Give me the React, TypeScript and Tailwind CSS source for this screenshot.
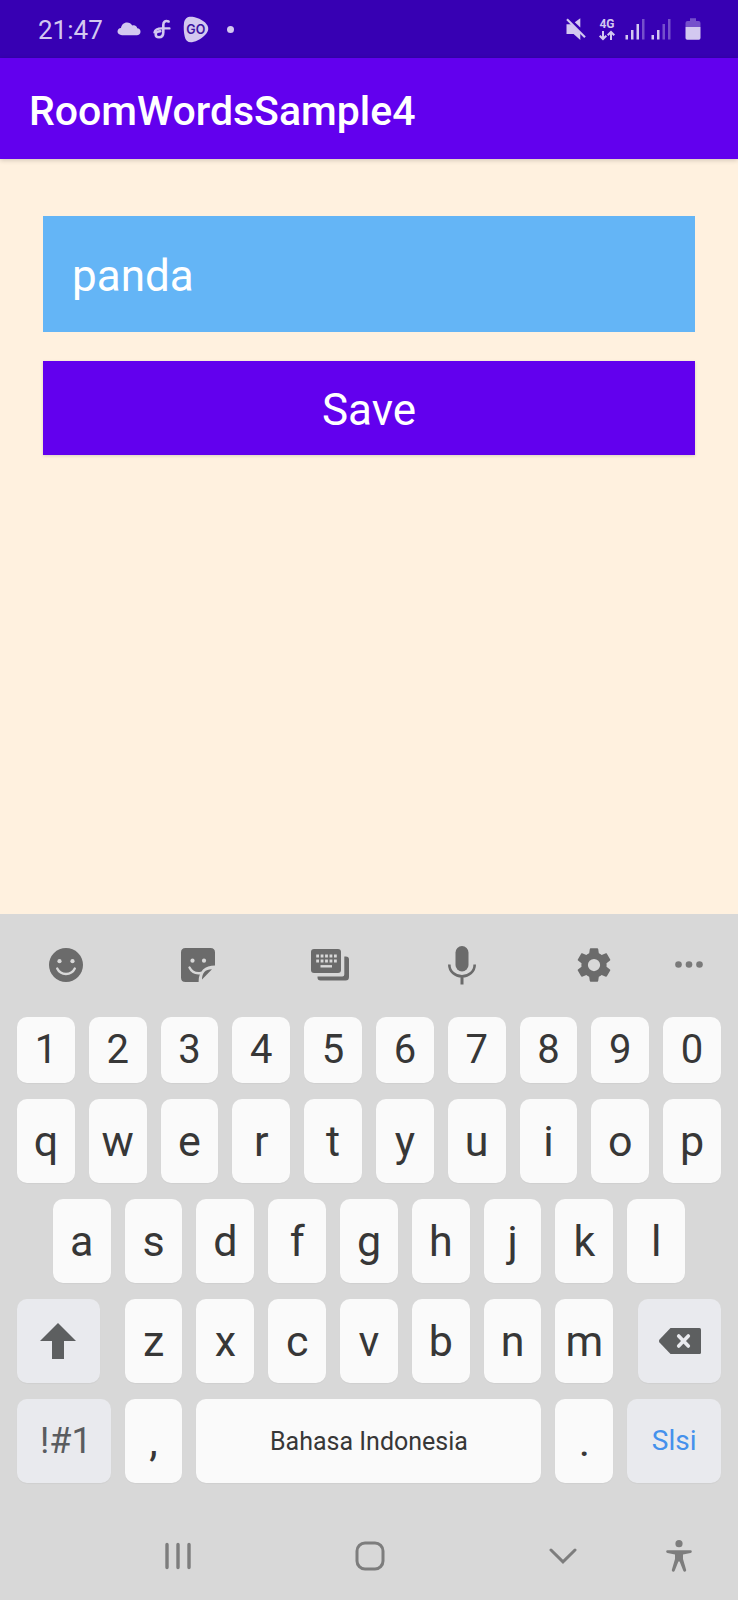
import { useState } from 'react';
import type { ReactNode } from 'react';

const digits = '1234567890'.split('');
const topLetters = 'qwertyuiop'.split('');
const homeLetters = 'asdfghjkl'.split('');
const bottomLetters = 'zxcvbnm'.split('');

function StatusBar() {
  return (
    <div className="flex h-[58px] items-center bg-[#3700b3] pl-[38px] pr-[37px] text-[#d3c8f0]">
      <span className="pt-[2px] text-[26px] leading-8">21:47</span>
      <svg className="ml-[14px] h-[14px] w-6" viewBox="0 0 24 14" fill="currentColor" aria-hidden="true">
        <path d="M5 13.200C2.400 13.200.5 11.700.5 9.600.5 7.700 2 6.300 4 6.100 4.300 2.800 6.800.4 10 .4c2.300 0 4.200 1.200 5.200 3.100.5-.2 1-.3 1.500-.3 1.900 0 3.300 1.300 3.500 3.100 2 .2 3.300 1.500 3.300 3.400 0 2.100-1.600 3.500-3.700 3.500z" />
      </svg>
      <svg className="ml-3 h-5 w-[18px]" viewBox="0 0 18 20" fill="none" stroke="currentColor" strokeLinecap="round" aria-hidden="true">
        <path d="M15.600 2.500C12.200 1.300 10.300 2.700 10.300 6v7.200c0 3-1.700 5-4.300 5-2 0-3.300-1.200-3.300-2.800 0-2 1.800-3.100 4.600-3.100" strokeWidth="2.600" />
        <path d="M16.400 9.400H9C4.800 9.400 2 10.800 1.500 13.400" strokeWidth="2.400" />
      </svg>
      <svg className="ml-3 h-[27px] w-[26px]" viewBox="0 0 26 27" aria-hidden="true">
        <path d="M1 7C1.700 2 5 .2 9.500.8c6 .8 13 4.600 15.100 9 1.200 2.600.8 5.200-1.200 7.700-3.200 4-9.600 8.200-14.400 8.700-4.100.4-6.500-1.600-7.300-5.700C.8 16.400.4 11 1 7z" fill="currentColor" />
        <text x="12.800" y="18" textAnchor="middle" fontFamily="Inter, Roboto, sans-serif" fontSize="12.500" fontWeight="600" fill="#3c149f">GO</text>
      </svg>
      <span className="ml-[18px] size-[7px] rounded-full bg-[#d3c8f0]" />

      <svg className="ml-auto h-[22px] w-5" viewBox="0 0 20 22" fill="currentColor" aria-hidden="true">
        <path d="M.5 6.300h4.600L14.300 15v7L7.600 16H.5z" />
        <path d="M8.800 4.200 14.300.200v9.200z" />
        <path d="M1 1.200 19 19.200" stroke="currentColor" strokeWidth="2.200" />
      </svg>
      <svg className="ml-[11px] h-[26px] w-5" viewBox="0 0 20 26" fill="none" stroke="currentColor" strokeWidth="2" aria-hidden="true">
        <text x="10" y="12" textAnchor="middle" stroke="none" fill="currentColor" fontFamily="Roboto, sans-serif" fontSize="12" fontWeight="700">4G</text>
        <path d="M6 15v8M2.700 19.700 6 23l3.300-3.300M14 24v-8M10.700 19.300 14 16l3.300 3.300" />
      </svg>
      <svg className="ml-2 h-[22px] w-5" viewBox="0 0 20 22" fill="currentColor" aria-hidden="true">
        <path d="M.5 17H3v4.500H.5zM6 12h2.500v9.500H6zM11.500 6H14v15.500h-2.500z" />
        <path d="M17 1h2.500v20.500H17z" opacity=".4" />
      </svg>
      <svg className="ml-[6px] h-[22px] w-5" viewBox="0 0 20 22" fill="currentColor" aria-hidden="true">
        <path d="M.5 17H3v4.500H.5zM6 12h2.500v9.500H6z" />
        <path d="M11.500 6H14v15.500h-2.500zM17 1h2.500v20.500H17z" opacity=".4" />
      </svg>
      <svg className="ml-[14px] h-[22px] w-4" viewBox="0 0 16 22" fill="currentColor" aria-hidden="true">
        <path d="M.5 9V5q0-2 2-2H5V.300h6V3h2.500q2 0 2 2v4z" opacity=".4" />
        <path d="M.5 9h15v11q0 1.700-1.700 1.700H2.200Q.5 21.700.5 20z" />
      </svg>
    </div>
  );
}

function ToolButton({ label, className, children }: { label: string; className: string; children: ReactNode }) {
  return (
    <button type="button" aria-label={label} className={`flex h-full items-center justify-center ${className}`}>
      {children}
    </button>
  );
}

function Toolbar() {
  return (
    <div className="flex h-[103px] pb-[2px] pr-5 text-[#6b6b6b]">
      <ToolButton label="Emoji" className="flex-1">
        <svg className="size-[34px]" viewBox="0 0 34 34">
          <circle cx="17" cy="17" r="17" fill="currentColor" />
          <circle cx="10.500" cy="13.200" r="2.100" fill="#d8d8d8" />
          <circle cx="23.500" cy="13.200" r="2.100" fill="#d8d8d8" />
          <path d="M8.200 20.500c3.500 7.300 14.100 7.300 17.600 0" fill="none" stroke="#d8d8d8" strokeWidth="2.400" strokeLinecap="round" />
        </svg>
      </ToolButton>
      <ToolButton label="Stickers" className="flex-1">
        <svg className="size-[34px]" viewBox="0 0 34 34">
          <path d="M4.500 0h25Q34 0 34 4.500V17.600C24 17.600 17.600 23 17.600 34H4.500Q0 34 0 29.500v-25Q0 0 4.500 0z" fill="currentColor" />
          <circle cx="11.500" cy="12.700" r="2.100" fill="#d8d8d8" />
          <circle cx="23" cy="12.700" r="2.100" fill="#d8d8d8" />
          <path d="M8.500 19.500c2 4.200 6.500 6.300 11.500 5.500" fill="none" stroke="#d8d8d8" strokeWidth="2.400" strokeLinecap="round" />
          <path d="M21 31.500C21 25 24 21.200 31 21.200z" fill="currentColor" />
        </svg>
      </ToolButton>
      <ToolButton label="Keyboard modes" className="flex-1">
        <svg className="h-8 w-[38px]" viewBox="0 0 38 32">
          <rect x="0" y="0" width="30" height="24" rx="3" fill="currentColor" />
          <path d="M33.300 7.500h1.500Q38 7.500 38 10.500V28q0 3.500-3.500 3.500H9.500Q6.500 31.500 6.500 28.500V27.400h24.800q2 0 2-2z" fill="currentColor" />
          <path d="M5.200 7h20.600M5.200 12h20.600" stroke="#d8d8d8" strokeWidth="2.800" strokeDasharray="2.800 1.650" />
          <path d="M9.500 17.300h11.500" stroke="#d8d8d8" strokeWidth="2.400" />
        </svg>
      </ToolButton>
      <ToolButton label="Voice input" className="flex-1">
        <svg className="h-10 w-7" viewBox="0 0 28 40" fill="none" stroke="currentColor">
          <rect x="7.500" y="1" width="13" height="25.500" rx="6.500" fill="currentColor" stroke="none" />
          <path d="M1.300 19.500C1.300 26.500 7 31.300 14 31.300s12.700-4.800 12.700-11.800" strokeWidth="2.600" />
          <path d="M14 31v8.500" strokeWidth="3" />
        </svg>
      </ToolButton>
      <ToolButton label="Settings" className="flex-1">
        <svg className="size-[42px]" viewBox="0 0 24 24" fill="currentColor">
          <path d="M19.140 12.940c.04-.3.06-.61.06-.94 0-.32-.02-.64-.07-.94l2.030-1.580c.18-.14.23-.41.12-.61l-1.920-3.320c-.12-.22-.37-.29-.59-.22l-2.390.96c-.5-.38-1.030-.7-1.620-.94l-.36-2.540c-.04-.24-.24-.41-.48-.41h-3.840c-.24 0-.43.17-.47.41l-.36 2.540c-.59.24-1.130.57-1.620.94l-2.390-.96c-.22-.08-.47 0-.59.22L2.740 8.870c-.12.21-.08.47.12.61l2.030 1.580c-.05.3-.09.63-.09.94s.02.64.07.94l-2.030 1.580c-.18.14-.23.41-.12.61l1.920 3.320c.12.22.37.29.59.22l2.390-.96c.5.38 1.030.7 1.620.94l.36 2.540c.05.24.24.41.48.41h3.840c.24 0 .44-.17.47-.41l.36-2.540c.59-.24 1.130-.56 1.620-.94l2.390.96c.22.08.47 0 .59-.22l1.920-3.320c.12-.22.07-.47-.12-.61l-2.010-1.580zM12 15.500a3.500 3.500 0 1 1 0-7 3.500 3.500 0 0 1 0 7z" />
        </svg>
      </ToolButton>
      <ToolButton label="More options" className="w-[58px]">
        <svg className="h-[7px] w-7" viewBox="0 0 28 7" fill="#7a7a7a">
          <circle cx="3.500" cy="3.500" r="3.300" />
          <circle cx="14" cy="3.500" r="3.300" />
          <circle cx="24.500" cy="3.500" r="3.300" />
        </svg>
      </ToolButton>
    </div>
  );
}

function Key({ className = 'col-span-2 h-[84px] text-[43px]', tone = 'bg-[#fafafa] text-[#373737]', label, onPress, children }: {
  className?: string;
  tone?: string;
  label?: string;
  onPress?: () => void;
  children: ReactNode;
}) {
  return (
    <button
      type="button"
      aria-label={label}
      onClick={onPress}
      className={`flex items-center justify-center rounded-[10px] leading-none shadow-[0_1px_1px_rgba(0,0,0,0.04)] ${tone} ${className}`}
    >
      {children}
    </button>
  );
}

function Keyboard({ onType, onErase }: { onType: (text: string) => void; onErase: () => void }) {
  return (
    <div className="grid grid-cols-20 gap-x-[14px] gap-y-4 px-[17px]">
      {digits.map((d) => (
        <Key key={d} className="col-span-2 h-[66px] text-[40px]" onPress={() => onType(d)}>{d}</Key>
      ))}
      {topLetters.map((c) => (
        <Key key={c} onPress={() => onType(c)}>{c}</Key>
      ))}
      {homeLetters.map((c, i) => (
        <Key
          key={c}
          className={i === 0 ? 'col-span-2 col-start-2 h-[84px] text-[43px]' : 'col-span-2 h-[84px] text-[43px]'}
          onPress={() => onType(c)}
        >
          {c}
        </Key>
      ))}
      <Key label="Shift" className="col-span-3 col-start-1 mr-[11px] h-[84px]" tone="bg-[#e9eaee] text-[#5d5f60]">
        <svg className="h-9 w-9" viewBox="0 0 36 36" fill="currentColor">
          <path d="M18 0 36 18H24v18H12V18H0z" />
        </svg>
      </Key>
      {bottomLetters.map((c) => (
        <Key key={c} onPress={() => onType(c)}>{c}</Key>
      ))}
      <Key label="Backspace" className="col-span-3 ml-[11px] h-[84px]" tone="bg-[#e9eaee] text-[#5d5f60]" onPress={onErase}>
        <svg className="h-[26px] w-[42px]" viewBox="0 0 42 26">
          <path d="M11.500 0H40.500Q42 0 42 1.500v23Q42 26 40.500 26H11.500L.5 14.500Q-.5 13 .5 11.500z" fill="currentColor" />
          <path d="m19.700 8 9.600 10M29.300 8l-9.600 10" stroke="#e9eaee" strokeWidth="3.600" strokeLinecap="round" />
        </svg>
      </Key>
      <Key className="col-span-3 h-[84px] pl-1 text-[36px]" tone="bg-[#e9eaee] text-[#5a5c5f]">!#1</Key>
      <Key onPress={() => onType(',')}>,</Key>
      <Key className="col-span-10 h-[84px] text-[25px]" onPress={() => onType(' ')}>Bahasa Indonesia</Key>
      <Key onPress={() => onType('.')}>.</Key>
      <Key className="col-span-3 h-[84px] text-[28px]" tone="bg-[#e9eaee] text-[#4591ec]">Slsi</Key>
    </div>
  );
}

function NavigationBar() {
  return (
    <div className="mt-[29px] flex h-[88px] pl-[82px] pr-[38px] text-[#7d7d7d]">
      <ToolButton label="Recent apps" className="flex-1">
        <svg className="h-7 w-[26px]" viewBox="0 0 26 28" fill="none" stroke="currentColor" strokeWidth="3.400" strokeLinecap="round">
          <path d="M2 2.500v23M13 2.500v23M24 2.500v23" />
        </svg>
      </ToolButton>
      <ToolButton label="Home" className="flex-1">
        <svg className="size-[30px]" viewBox="0 0 30 30" fill="none" stroke="currentColor" strokeWidth="3">
          <rect x="2" y="2" width="26" height="26" rx="8" />
        </svg>
      </ToolButton>
      <ToolButton label="Hide keyboard" className="flex-1">
        <svg className="h-4 w-7" viewBox="0 0 28 16" fill="none" stroke="currentColor" strokeWidth="3" strokeLinecap="round">
          <path d="M2 2l12 11.800L26 2" />
        </svg>
      </ToolButton>
      <ToolButton label="Accessibility" className="w-[41px]">
        <svg className="h-8 w-[26px]" viewBox="0 0 26 32" fill="currentColor">
          <circle cx="13" cy="3.700" r="3.600" />
          <path d="M1.500 10.200h23q1.300.1 1.300 1.300T24.500 13L17 14.500v4.500l3.200 11q.2 1.400-1.200 1.700-1.200.2-1.700-1L13.600 21.500h-1.200L8.700 30.700q-.5 1.200-1.700 1-1.400-.3-1.200-1.700L9 19v-4.500L1.500 13Q.2 12.700.2 11.500t1.300-1.300z" />
        </svg>
      </ToolButton>
    </div>
  );
}

export default function App() {
  const [word, setWord] = useState('panda');

  return (
    <div className="flex min-h-screen flex-col bg-[#fff1df] font-[Roboto,sans-serif]">
      <StatusBar />
      <header className="z-10 flex h-[101px] items-center bg-[#6200ee] px-[29px] pt-1 shadow-[0_1px_5px_rgba(0,0,0,0.2)]">
        <h1 className="text-[41px] font-medium leading-[48px] text-white">RoomWordsSample4</h1>
      </header>
      <main className="flex-1 px-[43px] pt-[57px]">
        <form className="flex flex-col gap-[29px]" onSubmit={(e) => e.preventDefault()}>
          <input
            type="text"
            aria-label="Word"
            value={word}
            onChange={(e) => setWord(e.target.value)}
            className="h-[116px] w-full bg-[#64b5f6] px-[29px] pt-1 text-[44px] text-white outline-none"
          />
          <button type="submit" className="h-[94px] w-full bg-[#6200ee] pt-1 text-[44px] leading-none text-white shadow-[0_1px_3px_rgba(0,0,0,0.14)]">
            Save
          </button>
        </form>
      </main>
      <section aria-label="Keyboard" className="bg-[#d8d8d8]">
        <Toolbar />
        <Keyboard onType={(text) => setWord((w) => w + text)} onErase={() => setWord((w) => w.slice(0, -1))} />
        <NavigationBar />
      </section>
    </div>
  );
}
